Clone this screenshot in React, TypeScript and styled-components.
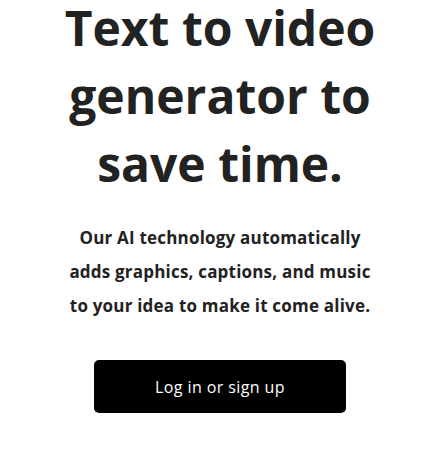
import React from 'react';
import styled, { createGlobalStyle } from 'styled-components';

const GlobalStyle = createGlobalStyle`
  html, body {
    margin: 0;
    padding: 0;
    background: #fff;
  }
  body {
    font-family: 'Open Sans', 'Liberation Sans', sans-serif;
    color: #222;
  }
`;

const Hero = styled.section`
  display: flex;
  flex-direction: column;
  align-items: center;
  padding: 0 0 0 15px;
  text-align: center;
`;

const Title = styled.h1`
  margin: 0;
  font-size: 48px;
  font-weight: 700;
  color: #222;
`;

const TitleLine = styled.span<{ $first?: boolean }>`
  display: block;
  line-height: ${p => (p.$first ? '56px' : '68px')};
  margin-bottom: ${p => (p.$first ? '6px' : '0')};
`;

const Lead = styled.p`
  margin: 23px 0 0;
  max-width: 310px;
  font-size: 17px;
  font-weight: 700;
  line-height: 34px;
  letter-spacing: 0.2px;
  color: #222;
`;

const Button = styled.button`
  margin-top: 37px;
  width: 252px;
  height: 53px;
  border: none;
  border-radius: 5px;
  background: #000;
  color: #fff;
  font-family: inherit;
  font-size: 16px;
  font-weight: 400;
  letter-spacing: 0.4px;
  cursor: pointer;
`;

const App: React.FC = () => (
  <>
    <GlobalStyle />
    <Hero>
      <Title>
        <TitleLine $first>Text to video</TitleLine>
        <TitleLine>generator to</TitleLine>
        <TitleLine>save time.</TitleLine>
      </Title>
      <Lead>Our AI technology automatically adds graphics, captions, and music to your idea to make it come alive.</Lead>
      <Button>Log in or sign up</Button>
    </Hero>
  </>
);

export default App;
